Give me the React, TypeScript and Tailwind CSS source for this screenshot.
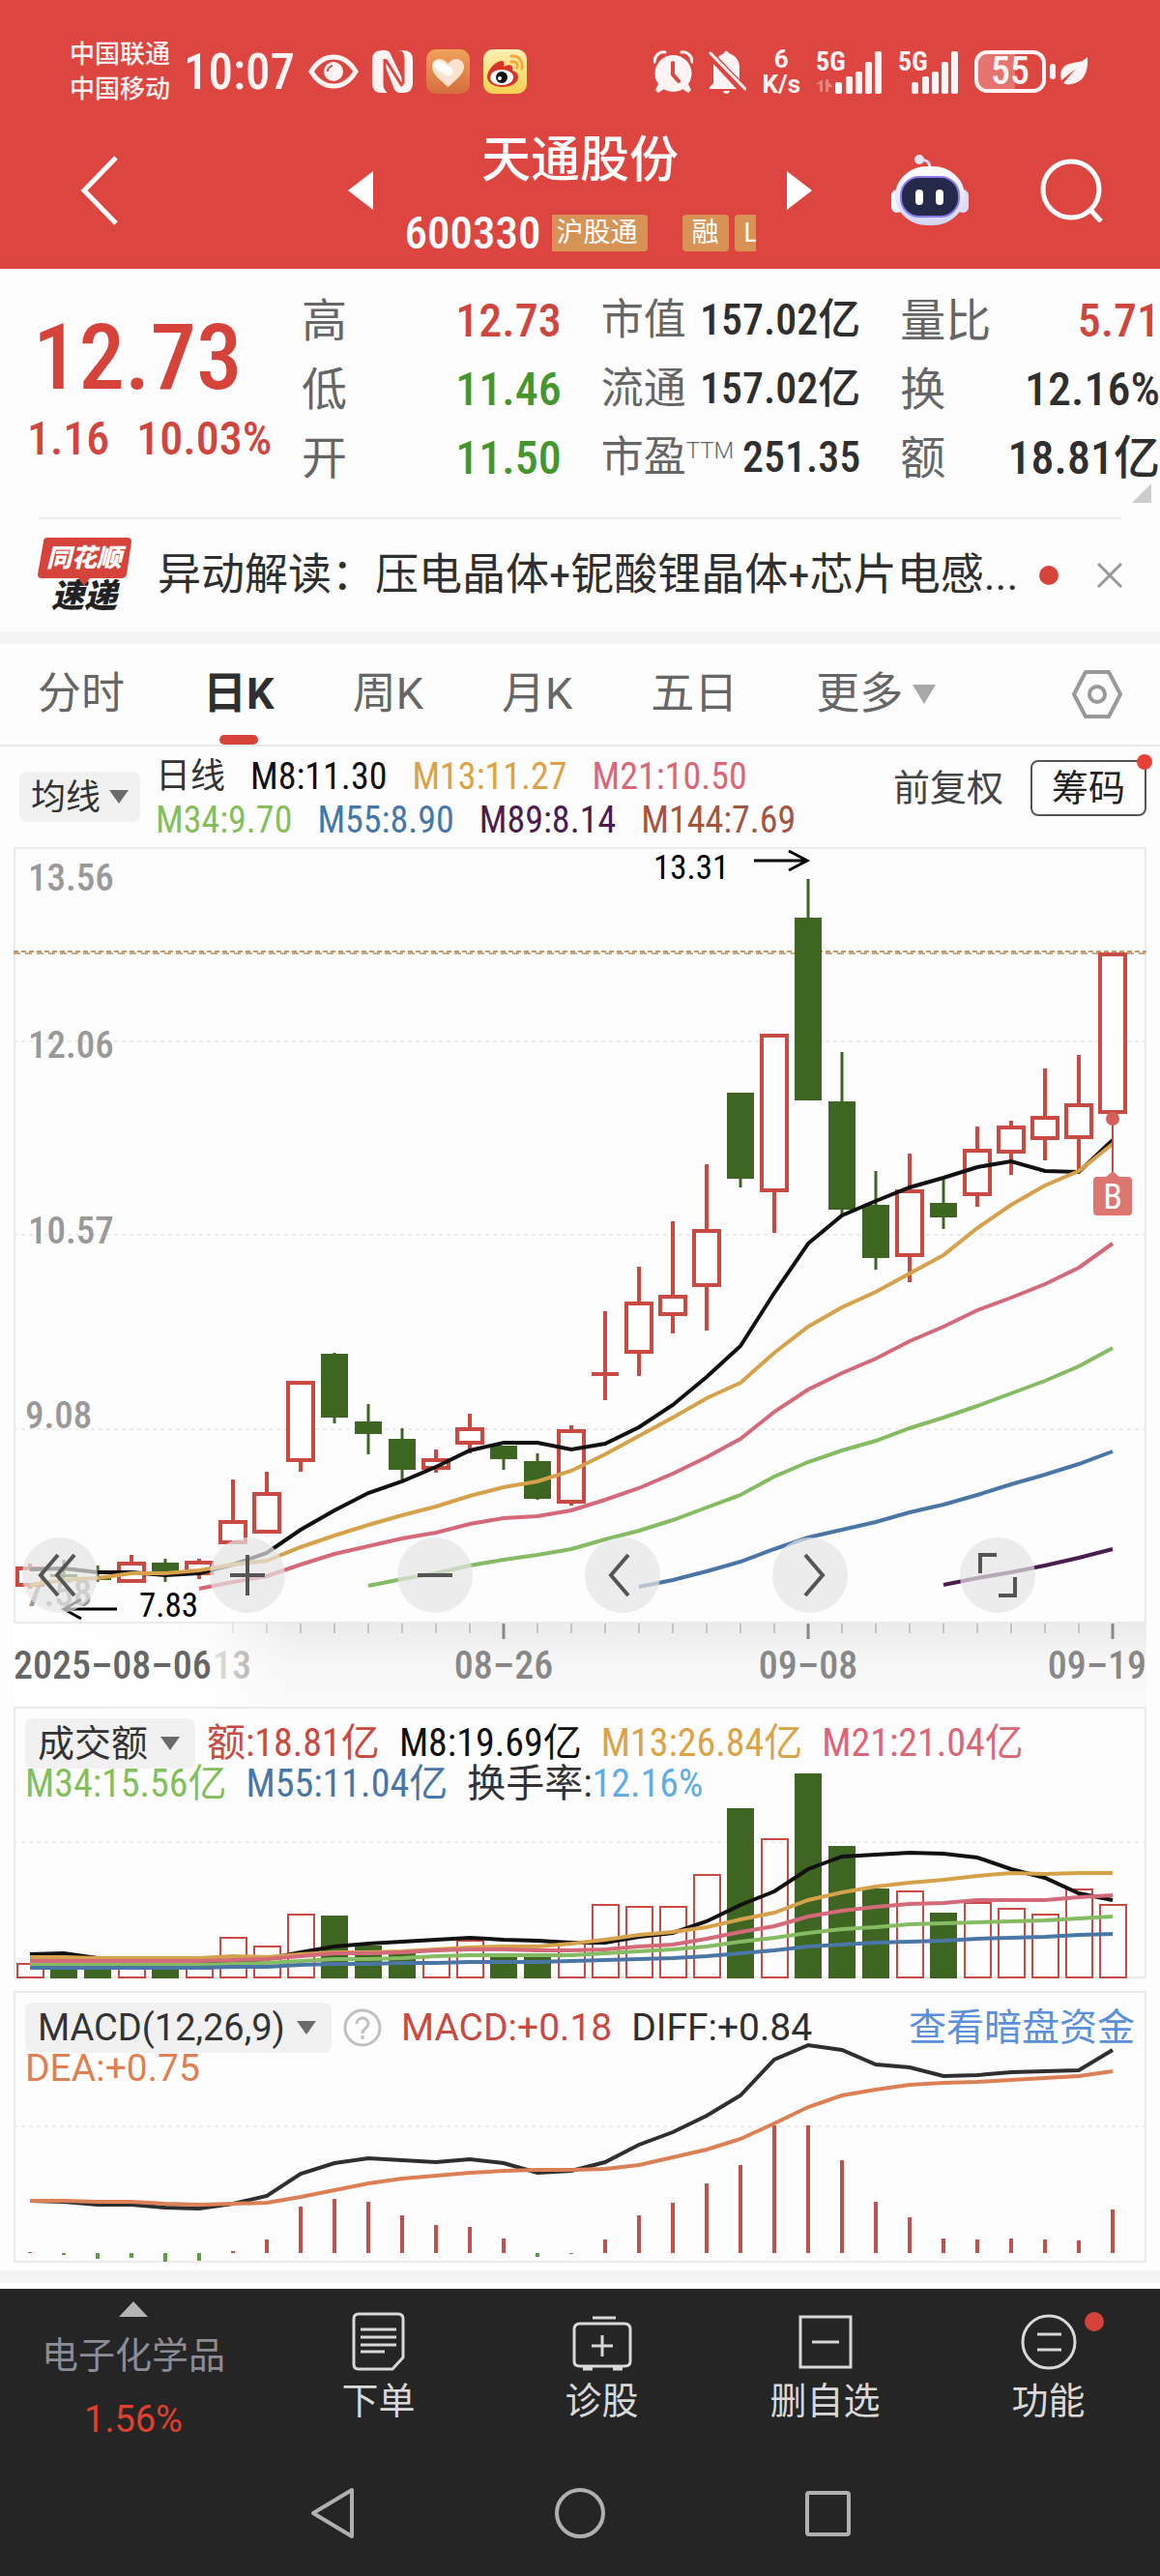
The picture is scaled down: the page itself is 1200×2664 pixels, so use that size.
import { useState, type ReactNode } from "react";

type Candle = readonly [high: number, top: number, bottom: number, low: number, up: 0 | 1];

const RED = "#c94a42";
const GREEN = "#3f6523";

const MA_COLORS = {
  m8: "#111111",
  m13: "#d5a14a",
  m21: "#d4697a",
  m34: "#84bb63",
  m55: "#4a76a5",
  m89: "#4a1c50",
} as const;

// One slot per trading day, 35 units apart
const slotX = (i: number) => 17 + i * 35;

const CANDLES: Candle[] = [
  [741, 744, 765, 767, 1], [737, 752, 755, 758, 0], [743, 756, 758, 760, 0], [732, 739, 761, 761, 1],
  [736, 740, 754, 760, 0], [736, 738, 753, 757, 1], [654, 696, 721, 721, 1], [646, 667, 710, 710, 1],
  [552, 552, 636, 646, 1], [523, 524, 590, 596, 0], [576, 594, 607, 628, 0], [601, 612, 644, 654, 0],
  [623, 632, 644, 647, 1], [586, 600, 618, 627, 1], [619, 619, 633, 644, 0], [627, 635, 674, 675, 0],
  [598, 602, 679, 681, 1], [480, 543, 547, 572, 1], [434, 470, 524, 547, 1], [387, 463, 485, 503, 1],
  [328, 395, 455, 500, 1], [254, 254, 343, 352, 0], [193, 193, 357, 399, 1], [33, 73, 262, 262, 0],
  [212, 263, 375, 381, 0], [335, 370, 425, 437, 0], [317, 354, 424, 450, 1], [343, 368, 383, 395, 0],
  [289, 312, 361, 372, 1], [283, 288, 317, 339, 1], [229, 278, 303, 324, 1], [215, 265, 302, 334, 1],
  [109, 109, 276, 282, 1],
];

const PRICE_LINES = [
  { color: MA_COLORS.m8, start: 0, ys: [747, 746, 750, 750, 753, 751, 742, 730, 706, 686, 668, 656, 641, 624, 616, 616, 623, 617, 600, 577, 548, 516, 461, 410, 381, 366, 352, 342, 331, 325, 335, 336, 303] },
  { color: MA_COLORS.m13, start: 0, ys: [763, 758, 756, 751, 751, 748, 742, 738, 724, 712, 701, 691, 682, 671, 662, 656, 645, 628, 609, 590, 570, 554, 523, 496, 476, 460, 441, 422, 394, 370, 350, 335, 307] },
  { color: MA_COLORS.m21, start: 5, ys: [767, 760, 754, 742, 731, 723, 715, 709, 700, 694, 692, 686, 675, 663, 648, 631, 612, 584, 561, 544, 529, 511, 496, 479, 466, 452, 435, 410] },
  { color: MA_COLORS.m34, start: 10, ys: [764, 757, 751, 743, 737, 732, 726, 716, 707, 696, 683, 670, 651, 636, 624, 614, 601, 590, 578, 565, 552, 537, 518] },
  { color: MA_COLORS.m55, start: 18, ys: [765, 758, 749, 739, 726, 714, 706, 698, 688, 680, 670, 659, 649, 638, 625] },
  { color: MA_COLORS.m89, start: 27, ys: [763, 756, 750, 743, 735, 726] },
];

const VOLUME_TOPS = [265, 270, 271, 270, 270, 270, 238, 247, 214, 216, 247, 255, 257, 241, 255, 255, 242, 204, 206, 206, 173, 105, 136, 69, 144, 188, 190, 213, 202, 208, 214, 188, 204];

const VOLUME_LINES = [
  { color: MA_COLORS.m8, start: 0, ys: [256, 255, 260, 262, 263, 266, 265, 261, 254, 248, 245, 243, 241, 239, 241, 242, 244, 244, 238, 234, 222, 205, 191, 168, 155, 153, 151, 152, 156, 168, 177, 193, 200] },
  { color: MA_COLORS.m13, start: 0, ys: [259, 259, 260, 260, 260, 260, 258, 259, 256, 254, 254, 253, 251, 249, 248, 248, 245, 241, 236, 233, 228, 220, 213, 200, 192, 186, 182, 179, 175, 172, 173, 172, 172] },
  { color: MA_COLORS.m21, start: 0, ys: [263, 263, 263, 263, 263, 263, 262, 261, 258, 255, 255, 254, 252, 251, 251, 252, 252, 251, 248, 246, 240, 233, 227, 217, 211, 207, 204, 203, 200, 200, 200, 197, 195] },
  { color: MA_COLORS.m34, start: 0, ys: [267, 267, 267, 267, 267, 267, 266, 265, 263, 261, 261, 260, 258, 257, 257, 257, 257, 255, 253, 251, 248, 243, 239, 234, 230, 228, 225, 224, 223, 222, 221, 219, 217] },
  { color: MA_COLORS.m55, start: 0, ys: [270, 270, 270, 270, 270, 270, 269, 269, 267, 266, 266, 265, 265, 264, 264, 264, 263, 262, 261, 260, 258, 255, 252, 248, 246, 244, 243, 242, 240, 239, 238, 236, 235] },
];

const MACD_BASE = 271;
const MACD_BARS = [270, 273, 277, 276, 280, 279, 269, 257, 223, 215, 218, 232, 242, 244, 256, 275, 272, 257, 232, 219, 199, 180, 139, 139, 175, 218, 234, 256, 257, 256, 257, 258, 226];

const MACD_LINES = [
  { color: "#2f2f2f", start: 0, ys: [217, 218, 221, 221, 224, 225, 220, 212, 189, 178, 173, 175, 177, 174, 178, 188, 186, 177, 159, 146, 129, 108, 71, 56, 61, 76, 79, 88, 87, 84, 83, 82, 61] },
  { color: "#dc7f55", start: 0, ys: [217, 217, 218, 218, 220, 221, 220, 219, 213, 206, 199, 194, 191, 188, 186, 185, 185, 184, 180, 172, 164, 153, 137, 120, 108, 102, 97, 95, 94, 92, 90, 88, 83] },
];

const PRICE_LEGEND = [
  { text: "日线", cls: "text-[36px] text-[#333]" },
  { text: "M8:11.30", cls: "text-[#111]" },
  { text: "M13:11.27", cls: "text-[#dba345]" },
  { text: "M21:10.50", cls: "text-[#dc6678]" },
  { text: "M34:9.70", cls: "text-[#84bf5c]" },
  { text: "M55:8.90", cls: "text-[#4677a8]" },
  { text: "M89:8.14", cls: "text-[#4a1c50]" },
  { text: "M144:7.69", cls: "text-[#a5543f]" },
];

const STATS = [
  [
    { label: "高", value: "12.73", cls: "text-[#cf463e]" },
    { label: "低", value: "11.46", cls: "text-[#45962f]" },
    { label: "开", value: "11.50", cls: "text-[#45962f]" },
  ],
  [
    { label: "市值", value: "157.02亿", cls: "text-[#2f2f2f]" },
    { label: "流通", value: "157.02亿", cls: "text-[#2f2f2f]" },
    { label: "市盈", sup: "TTM", value: "251.35", cls: "text-[#2f2f2f]" },
  ],
  [
    { label: "量比", value: "5.71", cls: "text-[#cf463e]" },
    { label: "换", value: "12.16%", cls: "text-[#2f2f2f]" },
    { label: "额", value: "18.81亿", cls: "text-[#2f2f2f]" },
  ],
];

const TABS = ["分时", "日K", "周K", "月K", "五日"];

function Lines({ lines }: { lines: { color: string; start: number; ys: number[] }[] }) {
  return (
    <>
      {lines.map(l => (
        <polyline
          key={l.color}
          points={l.ys.map((y, i) => `${slotX(l.start + i)},${y}`).join(" ")}
          fill="none"
          stroke={l.color}
          strokeWidth="4"
        />
      ))}
    </>
  );
}

function GridLine({ y }: { y: number }) {
  return <line x1="0" x2="1172" y1={y} y2={y} stroke="#ececec" strokeWidth="2" strokeDasharray="4 4" />;
}

function Frame({ height }: { height: number }) {
  return <rect x="1" y="1" width="1170" height={height - 2} fill="none" stroke="#ebebeb" strokeWidth="2" />;
}

function SignalBars({ data }: { data?: boolean }) {
  return (
    <svg className="overflow-visible" width={data ? 69 : 63} height="46" viewBox={data ? "0 0 69 46" : "6 0 63 46"} fill="#fff3f3">
      <text x={data ? 0 : 6} y="22" fontSize="28" fontWeight="700">5G</text>
      {data && <path d="M7 31v13H4v-8H0zM10 31v13h3v-5h5l-5-5v-3z" opacity="0.35" />}
      {[[20, 34], [31, 28], [41, 23], [51, 13], [61, 2]].map(([x, y]) => (
        <rect key={x} x={x} y={y} width="7" height={46 - y} rx="2" />
      ))}
    </svg>
  );
}

function StatusBar() {
  return (
    <div className="flex h-[72px] items-center justify-between pr-[74px] pl-[72px] text-[#fff3f3]">
      <div className="flex items-center gap-[14px]">
        <div className="text-[26px] leading-9 font-medium">
          <p>中国联通</p>
          <p>中国移动</p>
        </div>
        <time className="text-[51px] leading-none font-medium">10:07</time>
        <svg width="52" height="36" viewBox="0 0 52 36">
          <path d="M3 18C9 8 17 3 26 3s17 5 23 15c-6 10-14 15-23 15S9 28 3 18z" fill="none" stroke="#fff3f3" strokeWidth="5" />
          <circle cx="26" cy="18" r="10" fill="#fff3f3" />
          <path d="M20 18a6 6 0 0 1 5-6" fill="none" stroke="#dd4540" strokeWidth="2" />
        </svg>
        <svg width="42" height="44" viewBox="0 0 42 44">
          <path d="M10 0h4c4 1 5 3 6 6l11 23V10c0-6-1-8-3-10h4q10 0 10 10v24q0 10-10 10h-4c-4-1-5-3-6-6L13 15v19c0 6 1 8 3 10h-6Q0 44 0 34V10Q0 0 10 0z" fill="#fff3f3" />
          <path d="M13 9v26q0 5 4 8M29 1q3 3 3 8v26" fill="none" stroke="#dd4540" strokeWidth="3" />
          <path d="M14 10l17 27" stroke="#dd4540" strokeWidth="3" />
        </svg>
        <svg width="45" height="46" viewBox="0 0 45 46">
          <defs>
            <linearGradient id="heart-bg" x1="0" y1="0" x2="0" y2="1">
              <stop offset="0" stopColor="#f0a259" />
              <stop offset="1" stopColor="#d56e3f" />
            </linearGradient>
          </defs>
          <rect width="45" height="46" rx="10" fill="url(#heart-bg)" />
          <path d="M22.500 39C14 31 6 26 6 18c0-9 11-11 16.500-3C28 7 39 9 39 18c0 8-8 13-16.500 21z" fill="#fde3cd" />
          <path d="M12 16l11 7" stroke="#fff" strokeWidth="9" strokeLinecap="round" />
        </svg>
        <svg width="45" height="46" viewBox="0 0 45 46">
          <defs>
            <linearGradient id="weibo-bg" x1="0" y1="0" x2="0" y2="1">
              <stop offset="0" stopColor="#fdf0b4" />
              <stop offset="1" stopColor="#f8cf4f" />
            </linearGradient>
          </defs>
          <rect width="45" height="46" rx="10" fill="url(#weibo-bg)" />
          <path d="M4 29c0-8 9-17 15-17 3 0 3 3 2 6 6-3 11-2 9 4 4 1 6 3 6 7 0 6-8 10-16 10S4 35 4 29z" fill="#d83327" />
          <ellipse cx="19" cy="29" rx="12" ry="8" fill="#fff" />
          <circle cx="19" cy="29" r="6" fill="#111" />
          <circle cx="17" cy="30" r="2" fill="#fff" />
          <path d="M29 7c8-1 12 5 11 13M29 13c5-1 7 2 6 6" fill="none" stroke="#efab35" strokeWidth="3" strokeLinecap="round" />
        </svg>
      </div>

      <div className="flex items-center gap-4">
        <svg width="41" height="44" viewBox="0 0 41 44" fill="#fff3f3">
          <path d="M5 35l-3 6 3 3 6-4zM36 35l3 6-3 3-6-4z" />
          <circle cx="20.500" cy="24" r="19" />
          <path d="M1 12C1 6 6 1 12 2M40 12c0-6-5-11-11-10" fill="none" stroke="#fff3f3" strokeWidth="3" strokeLinecap="round" />
          <path d="M20 13v12l6 7" fill="none" stroke="#dd4540" strokeWidth="4" strokeLinecap="round" />
        </svg>
        <svg width="39" height="46" viewBox="0 0 39 46" fill="#fff3f3">
          <path d="M10 8c2-2 4-3 6-4 1-3 4-3 5 0 7 2 11 8 11 15v12zM5 15l24 26H1v-2l4-4zM15 43h7c-1 4-6 4-7 0z" />
          <path d="M2 4l36 37" stroke="#fff3f3" strokeWidth="3" strokeLinecap="round" />
        </svg>
        <div className="text-center font-[Roboto] text-[26px] leading-[26px] font-bold">
          <p>6</p>
          <p>K/s</p>
        </div>
        <SignalBars data />
        <SignalBars />
        <div className="flex items-center gap-1">
          <div className="flex h-11 w-[74px] items-center justify-center rounded-[13px] border-4 border-[#fff3f3] bg-linear-to-r from-white/25 from-58% to-transparent to-58% text-[40px] leading-none font-medium">
            55
          </div>
          <span className="h-4 w-[6px] rounded-sm bg-[#fff3f3]" />
          <svg width="30" height="30" viewBox="0 0 30 30">
            <path d="M29 0c1 14-3 26-17 28-3 1-6 0-8-1l13-15L2 24C-1 12 5 8 14 6c7-1 11-2 15-6z" fill="#fff3f3" />
          </svg>
        </div>
      </div>
    </div>
  );
}

function TitleBar() {
  return (
    <div className="grid grid-cols-[3fr_4fr_3fr] items-center pt-6 pb-[18px] text-white">
      <button aria-label="返回" className="pl-[83px] text-left">
        <svg width="40" height="72" viewBox="0 0 40 72">
          <path d="M37 2L4 36l33 34" fill="none" stroke="#fff" strokeWidth="5" />
        </svg>
      </button>

      <div className="flex items-center justify-between">
        <button aria-label="上一只">
          <svg width="26" height="40" viewBox="0 0 26 40"><path d="M26 0v40L0 20z" fill="#fff" /></svg>
        </button>
        <div>
          <h1 className="text-center text-[51px] leading-[64px] font-medium">天通股份</h1>
          <div className="mt-6 flex h-[38px] items-center text-[28px] leading-[38px]">
            <span className="mr-3 text-[47px] font-medium">600330</span>
            <span className="mr-9 rounded-r-sm bg-[#d69355] px-1 pr-[10px]">沪股通</span>
            <span className="mr-[6px] rounded-sm bg-[#d69355] px-[10px]">融</span>
            <span className="w-[22px] overflow-hidden rounded-l-sm bg-[#d69355] pl-[10px]">L</span>
          </div>
        </div>
        <button aria-label="下一只">
          <svg width="26" height="40" viewBox="0 0 26 40"><path d="M0 0v40l26-20z" fill="#fff" /></svg>
        </button>
      </div>

      <div className="flex items-center justify-between pr-[58px] pl-[82px]">
        <button aria-label="智能助手">
          <svg width="80" height="74" viewBox="0 0 80 74">
            <defs>
              <linearGradient id="bot" x1="0" y1="0" x2="0" y2="1">
                <stop offset="0" stopColor="#fff" />
                <stop offset="1" stopColor="#d3d4f4" />
              </linearGradient>
            </defs>
            <path d="M29 5c8 0 11 3 11 9" fill="none" stroke="#dde" strokeWidth="3" />
            <circle cx="29" cy="5" r="5" fill="#e6e6f4" />
            <rect x="0" y="36" width="12" height="24" rx="6" fill="#f4f4ff" />
            <rect x="68" y="36" width="12" height="24" rx="6" fill="#dcdcf6" />
            <rect x="4" y="12" width="72" height="61" rx="33" fill="url(#bot)" />
            <rect x="10" y="23" width="60" height="41" rx="19" fill="#262a4a" stroke="#8b7bef" strokeWidth="2" />
            <rect x="25" y="36" width="8" height="16" rx="4" fill="#fff" />
            <rect x="46" y="36" width="8" height="16" rx="4" fill="#fff" />
          </svg>
        </button>
        <button aria-label="搜索">
          <svg width="66" height="66" viewBox="0 0 66 66" fill="none" stroke="#fff" strokeWidth="5">
            <circle cx="32" cy="32" r="29" />
            <path d="M52 53l11 12" />
          </svg>
        </button>
      </div>
    </div>
  );
}

function Quote() {
  return (
    <section className="relative flex pt-[18px] pb-[26px]">
      <div className="w-[26%] pt-[26px]">
        <p className="pl-[34px] text-[95px] leading-24 font-medium text-[#d5433b]">12.73</p>
        <p className="flex gap-7 pt-1 pl-7 text-[48px] leading-16 font-medium text-[#cf463e]">
          <span>1.16</span>
          <span>10.03%</span>
        </p>
      </div>
      <div className="grid flex-1 grid-cols-3 gap-[41px] leading-[71px]">
        {STATS.map((col, i) => (
          <dl key={i}>
            {col.map(s => (
              <div key={s.label} className="flex justify-between whitespace-nowrap">
                <dt className={["flex text-[#666]", i === 1 ? "text-[44px]" : "text-[47px]"].join(" ")}>
                  {s.label}
                  {"sup" in s && <span className="font-[Roboto] text-[24px] leading-[56px] font-light">{s.sup}</span>}
                </dt>
                <dd className={[s.cls, "font-medium", i === 1 ? "text-[44px]" : "text-[48px]"].join(" ")}>{s.value}</dd>
              </div>
            ))}
          </dl>
        ))}
      </div>
      <svg className="absolute right-[9px] bottom-[15px]" width="20" height="20" viewBox="0 0 20 20">
        <path d="M20 0v20H0z" fill="#ccc" />
      </svg>
    </section>
  );
}

function News() {
  return (
    <section className="mx-[39px] flex h-[118px] items-center border-t-2 border-[#ececec]">
      <div className="relative mr-7 w-24 text-center leading-[42px]">
        <svg className="absolute inset-x-0 top-0" width="97" height="50" viewBox="0 0 97 50">
          <path d="M10 0h83q4 0 4 4l-5 34q-1 4-5 4H54l-6 8-6-8H4q-4 0-4-4L6 4q0-4 4-4z" fill="#d5433b" />
        </svg>
        <p className="relative text-[26px] font-black text-white italic">同花顺</p>
        <p className="text-[34px] leading-9 font-black text-[#222] italic">速递</p>
      </div>
      <a href="#news" className="min-w-0 flex-1 truncate text-[45px] leading-[60px] text-[#2f2f2f]">
        异动解读：压电晶体+铌酸锂晶体+芯片电感...
      </a>
      <span className="mr-10 size-5 shrink-0 rounded-full bg-[#d5433b]" />
      <button aria-label="关闭">
        <svg width="26" height="26" viewBox="0 0 26 26"><path d="M1 1l24 24M25 1L1 25" stroke="#999" strokeWidth="3" /></svg>
      </button>
    </section>
  );
}

function PeriodTabs() {
  const [active, setActive] = useState("日K");
  return (
    <nav className="flex h-[106px] items-stretch gap-[81px] border-b-2 border-[#e8e8e8] px-[39px] text-[45px] text-[#666]">
      {TABS.map(t => (
        <button
          key={t}
          onClick={() => setActive(t)}
          className={["relative font-[Roboto,'Noto_Sans_CJK_SC',sans-serif]", t === active ? "font-bold text-[#2f2f2f]" : ""].join(" ")}
        >
          {t}
          {t === active && <span className="absolute bottom-0 left-1/2 h-[10px] w-10 -translate-x-1/2 rounded-full bg-[#d5433b]" />}
        </button>
      ))}
      <button className="flex items-center gap-[10px]">
        更多
        <svg width="24" height="20" viewBox="0 0 24 20"><path d="M0 0h24L12 20z" fill="#a8a8a8" /></svg>
      </button>
      <button aria-label="设置" className="ml-auto">
        <svg width="52" height="52" viewBox="0 0 52 52" fill="none" stroke="#999" strokeWidth="4" strokeLinejoin="round">
          <path d="M14 3h24l12 23-12 23H14L2 26z" />
          <circle cx="26" cy="26" r="8" />
        </svg>
      </button>
    </nav>
  );
}

function Picker({ label, value, compact }: { label: string; value: string; compact?: boolean }) {
  return (
    <div className="relative flex items-center rounded-lg bg-[#f1f1f1]">
      <select
        aria-label={label}
        defaultValue={value}
        className={["h-[52px] appearance-none text-[#333] outline-none", compact ? "pr-10 pl-3 text-[36px]" : "pr-12 pl-[13px] text-[38px]"].join(" ")}
      >
        <option>{value}</option>
      </select>
      <svg className={["pointer-events-none absolute", compact ? "right-3" : "right-4"].join(" ")} width="20" height="14" viewBox="0 0 20 14">
        <path d="M0 0h20L10 14z" fill="#6b6b6b" />
      </svg>
    </div>
  );
}

function PriceHeader() {
  return (
    <div className="flex h-[104px] items-center pr-[14px] pl-5">
      <Picker compact label="主图指标" value="均线" />
      <ul className="ml-4 flex max-w-[740px] flex-wrap gap-x-[26px] pt-1 text-[38px] leading-[45px]">
        {PRICE_LEGEND.map(l => <li key={l.text} className={l.cls}>{l.text}</li>)}
      </ul>
      <div className="ml-auto flex gap-7 self-start pt-[14px] text-[38px]">
        <button className="text-[#444]">前复权</button>
        <button className="relative h-[58px] rounded-lg border-2 border-[#555] px-5 leading-[54px] text-[#222]">
          筹码
          <span className="absolute -top-2 -right-2 size-4 rounded-full bg-[#e8413c]" />
        </button>
      </div>
    </div>
  );
}

const TOOLS = [
  { name: "最早", d: "M37 18L19 39l18 21M54 18L36 39l18 21" },
  { name: "放大", d: "M21 39h36M39 18v42" },
  { name: "缩小", d: "M21 39h36" },
  { name: "左移", d: "M45 18L27 39l18 21" },
  { name: "右移", d: "M34 18l18 21-18 21" },
  { name: "全屏", d: "M21 37V18h17M57 41v19H40" },
];

function PriceChart() {
  return (
    <section className="relative">
      <svg className="block w-full overflow-visible" viewBox="0 0 1172 802">
        <Frame height={803} />
        {[201, 401, 602].map(y => <GridLine key={y} y={y} />)}
        <g fontSize="39" fontWeight="500" fill="#999">
          <text x="15" y="45">13.56</text>
          <text x="15" y="218">12.06</text>
          <text x="15" y="410">10.57</text>
          <text x="12" y="601">9.08</text>
          <text x="12" y="785">7.58</text>
        </g>
        <path d="M0 108h1172" stroke="#bd9a72" strokeWidth="2" strokeDasharray="5 3" />
        <path d="M0 110h1172" stroke="#c7a987" strokeWidth="2" strokeDasharray="7 5" />
        {CANDLES.map(([high, top, bottom, low, up], i) => {
          const x = slotX(i);
          return up ? (
            <g key={i} stroke={RED} strokeWidth="4">
              <path d={`M${x} ${high}V${top}M${x} ${bottom}V${low}`} />
              {bottom - top < 6
                ? <path d={`M${x - 14} ${top + 2}h28`} />
                : <rect x={x - 13} y={top + 2} width="26" height={bottom - top - 4} fill="#fff" />}
            </g>
          ) : (
            <g key={i} fill={GREEN}>
              <rect x={x - 1.5} y={high} width="3" height={low - high} />
              <rect x={x - 14} y={top} width="28" height={bottom - top} />
            </g>
          );
        })}
        <Lines lines={PRICE_LINES} />

        {/* buy marker */}
        <path d="M1137 282v56" stroke={RED} strokeWidth="2" />
        <circle cx="1137" cy="281" r="7" fill="#d5605b" />
        <path d="M1129 342l8-7 8 7z" fill="#dd7671" />
        <rect x="1117" y="341" width="40" height="40" rx="4" fill="#dd7671" />
        <text x="1137" y="374" fontSize="36" fill="#fff" textAnchor="middle">B</text>

        <g fontSize="35" fill="#000">
          <text x="662" y="33">13.31</text>
          <text x="130" y="796">7.83</text>
        </g>
        <g fill="none" stroke="#000" strokeWidth="3">
          <path d="M766 14h55M802 4l19 10-19 10" />
          <path d="M107 788H52M70 778l-18 10 18 10" />
        </g>
      </svg>
      <div className="absolute bottom-[10px] left-[9px] flex gap-[116px]">
        {TOOLS.map(t => (
          <button key={t.name} aria-label={t.name} className="size-[78px] rounded-full bg-[#e4e4e4]/70">
            <svg width="78" height="78" viewBox="0 0 78 78" fill="none" stroke="#555" strokeWidth="4"><path d={t.d} /></svg>
          </button>
        ))}
      </div>
    </section>
  );
}

function DateAxis() {
  return (
    <svg className="block w-full" viewBox="0 0 1172 87">
      <defs>
        <linearGradient id="axis-shade" x1="0" y1="0" x2="0" y2="1">
          <stop offset="0" stopColor="#ebebeb" />
          <stop offset="0.5" stopColor="#f7f7f7" />
          <stop offset="1" stopColor="#fafafa" />
        </linearGradient>
        <linearGradient id="axis-fade">
          <stop offset="0" stopColor="#fff" />
          <stop offset="0.7" stopColor="#fff" stopOpacity="0.8" />
          <stop offset="1" stopColor="#fff" stopOpacity="0" />
        </linearGradient>
      </defs>
      <rect width="1172" height="87" fill="url(#axis-shade)" />
      {CANDLES.map((_, i) => {
        if (i < 6) return null;
        const major = i % 9 === 5;
        return <path key={i} d={`M${slotX(i)} 1v${major ? 16 : 10}`} stroke={major ? "#888" : "#c4c4c4"} strokeWidth={major ? 3 : 2} />;
      })}
      <g fontSize="40" fontWeight="500" fill="#888">
        <text x="206" y="58">13</text>
        <rect width="290" height="87" fill="url(#axis-fade)" />
        <text x="0" y="58" fill="#666">2025–08–06</text>
        <text x="507" y="58" textAnchor="middle">08–26</text>
        <text x="822" y="58" textAnchor="middle">09–08</text>
        <text x="1172" y="58" textAnchor="end">09–19</text>
      </g>
    </svg>
  );
}

function VolumeChart() {
  return (
    <section className="relative">
      <svg className="block w-full" viewBox="0 0 1172 281">
        <Frame height={281} />
        <GridLine y={140} />
        {VOLUME_TOPS.map((top, i) => {
          const x = slotX(i);
          return CANDLES[i][4]
            ? <rect key={i} x={x - 13} y={top + 1} width="27" height={279 - top} fill="none" stroke={RED} strokeWidth="2" />
            : <rect key={i} x={x - 14} y={top} width="28" height={281 - top} fill={GREEN} />;
        })}
        <Lines lines={VOLUME_LINES} />
      </svg>
      <div className="absolute inset-x-3 top-3 text-[40px] leading-[52px]">
        <div className="flex gap-x-5 whitespace-nowrap">
          <div className="-mr-2"><Picker label="成交额指标" value="成交额" /></div>
          <span className="text-[#c94a42]">额:18.81亿</span>
          <span className="text-[#111]">M8:19.69亿</span>
          <span className="text-[#dba345]">M13:26.84亿</span>
          <span className="text-[#dc6678]">M21:21.04亿</span>
        </div>
        <div className="flex gap-x-5 leading-8 whitespace-nowrap">
          <span className="text-[#84bf5c]">M34:15.56亿</span>
          <span className="text-[#4677a8]">M55:11.04亿</span>
          <span className="text-[#333]">换手率:<span className="text-[#61ace4]">12.16%</span></span>
        </div>
      </div>
    </section>
  );
}

function MacdChart() {
  return (
    <section className="relative">
      <svg className="block w-full" viewBox="0 0 1172 281">
        <Frame height={281} />
        <GridLine y={140} />
        {MACD_BARS.map((y, i) => (
          <path key={i} d={`M${slotX(i)} ${MACD_BASE}V${y}`} stroke={y < MACD_BASE ? "#c0524c" : "#5d9e4a"} strokeWidth="4" />
        ))}
        <Lines lines={MACD_LINES} />
      </svg>
      <div className="absolute inset-x-3 top-3 font-[Roboto,'Noto_Sans_CJK_SC',sans-serif] text-[39px] leading-[52px]">
        <div className="flex gap-x-5 whitespace-nowrap">
          <Picker label="副图指标" value="MACD(12,26,9)" />
          <button aria-label="指标说明" className="-mr-3 -ml-2 self-center">
            <svg width="40" height="40" viewBox="0 0 40 40" fill="none" stroke="#c0c0c0" strokeWidth="3">
              <circle cx="20" cy="20" r="18" />
              <path d="M14 16c0-8 12-8 12 0 0 5-6 4-6 10M20 28v4" />
            </svg>
          </button>
          <span className="pl-3 text-[#c94a42]">MACD:+0.18</span>
          <span className="text-[#2f2f2f]">DIFF:+0.84</span>
          <a href="#funds" className="ml-auto text-[#5b8fdc]">查看暗盘资金</a>
        </div>
        <p className="leading-8 text-[#e08050]">DEA:+0.75</p>
      </div>
    </section>
  );
}

const ACTIONS: { label: string; dot?: boolean; icon: ReactNode }[] = [
  {
    label: "下单",
    icon: <path d="M8 2h41q5 0 5 5v40L43 59H8q-5 0-5-5V7q0-5 5-5zM10 18h37M10 26h37M10 34h37M10 41h25" />,
  },
  {
    label: "诊股",
    icon: <path d="M19 6h24M6 12h46q6 0 6 6v33q0 5-6 5H6q-6 0-6-5V18q0-6 6-6zM29 24v22M18 35h22M9 59h10M40 59h10" />,
  },
  { label: "删自选", icon: <path d="M3 5h52v52H3zM15 31h28" /> },
  {
    label: "功能",
    dot: true,
    icon: <path d="M29 4a27 27 0 1 0 0 54 27 27 0 1 0 0-54zM17 23h25M17 39h25" />,
  },
];

function BottomBar() {
  return (
    <footer className="bg-[#252525] text-[#d8d8d8]">
      <div className="grid h-[176px] grid-cols-[276fr_231fr_231fr_231fr_231fr]">
        <button className="flex flex-col items-center pt-[13px] text-[38px]">
          <svg width="30" height="16" viewBox="0 0 30 16"><path d="M15 0l15 16H0z" fill="#b5b5b5" /></svg>
          <span className="mt-[14px] leading-[52px] text-[#8c8b96]">电子化学品</span>
          <span className="mt-[14px] font-[Roboto] leading-[52px] text-[#e0402e]">1.56%</span>
        </button>
        {ACTIONS.map(a => (
          <button key={a.label} className="flex flex-col items-center pt-6 text-[38px] leading-[52px]">
            <span className="relative">
              <svg className="overflow-visible" width="58" height="62" viewBox="0 0 58 62" fill="none" stroke="#d8d8d8" strokeWidth="3">{a.icon}</svg>
              {a.dot && <span className="absolute top-0 -right-7 size-5 rounded-full bg-[#d5433b]" />}
            </span>
            <span className="mt-1">{a.label}</span>
          </button>
        ))}
      </div>
      <div className="flex h-[121px] items-center justify-center gap-[205px] pb-[10px]">
        <button aria-label="后退">
          <svg width="48" height="54" viewBox="0 0 48 54"><path d="M44 3v48L4 27z" fill="none" stroke="#b0b0b0" strokeWidth="4" strokeLinejoin="round" /></svg>
        </button>
        <button aria-label="主屏幕">
          <svg width="54" height="54" viewBox="0 0 54 54"><circle cx="27" cy="27" r="24" fill="none" stroke="#b0b0b0" strokeWidth="4" /></svg>
        </button>
        <button aria-label="最近任务">
          <svg width="48" height="54" viewBox="0 0 48 54"><rect x="3" y="6" width="43" height="43" rx="2" fill="none" stroke="#b0b0b0" strokeWidth="4" /></svg>
        </button>
      </div>
    </footer>
  );
}

export default function App() {
  return (
    <div className="min-h-screen bg-[#fdfdfd] font-['Roboto_Condensed','Liberation_Sans_Narrow',Roboto,'Noto_Sans_CJK_SC',sans-serif]">
      <header className="bg-[#dd4540] pt-[38px]">
        <StatusBar />
        <TitleBar />
      </header>
      <Quote />
      <News />
      <div className="h-[13px] bg-[#f4f4f4]" />
      <PeriodTabs />
      <PriceHeader />
      <main className="mx-[14px]">
        <PriceChart />
        <DateAxis />
        <VolumeChart />
        <div className="h-[13px]" />
        <MacdChart />
      </main>
      <div className="mt-2 mb-[6px] h-[13px] bg-[#f4f4f4]" />
      <BottomBar />
    </div>
  );
}
